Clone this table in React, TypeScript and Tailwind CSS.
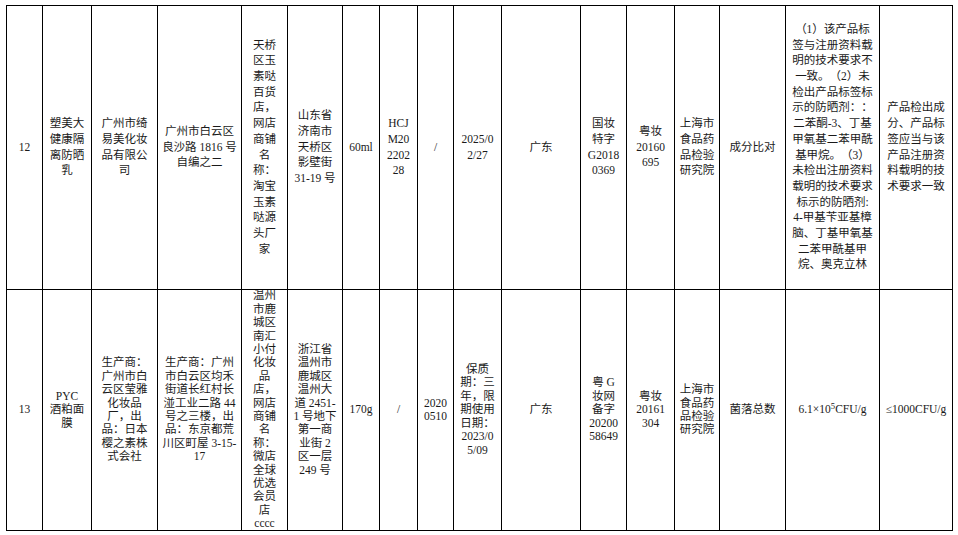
import React from "react";

type Cell = string[] | React.ReactNode;

const row12: Cell[] = [
  ["12"],
  ["塑美大", "健康隔", "离防晒", "乳"],
  ["广州市绮", "易美化妆", "品有限公", "司"],
  ["广州市白云区", "良沙路 1816 号", "自编之二"],
  ["天桥", "区玉", "素哒", "百货", "店，", "网店", "商铺", "名", "称：", "淘宝", "玉素", "哒源", "头厂", "家"],
  ["山东省", "济南市", "天桥区", "影壁街", "31-19 号"],
  ["60ml"],
  ["HCJ", "M20", "2202", "28"],
  ["/"],
  ["2025/0", "2/27"],
  ["广东"],
  ["国妆", "特字", "G2018", "0369"],
  ["粤妆", "20160", "695"],
  ["上海市", "食品药", "品检验", "研究院"],
  ["成分比对"],
  [
    "（1）该产品标",
    "签与注册资料载",
    "明的技术要求不",
    "一致。（2）未",
    "检出产品标签标",
    "示的防晒剂：：",
    "二苯酮-3、丁基",
    "甲氧基二苯甲酰",
    "基甲烷。（3）",
    "未检出注册资料",
    "载明的技术要求",
    "标示的防晒剂:",
    "4-甲基苄亚基樟",
    "脑、丁基甲氧基",
    "二苯甲酰基甲",
    "烷、奥克立林",
  ],
  ["产品检出成", "分、产品标", "签应当与该", "产品注册资", "料载明的技", "术要求一致"],
];

const row13: Cell[] = [
  ["13"],
  ["PYC", "酒粕面", "膜"],
  ["生产商：", "广州市白", "云区莹雅", "化妆品", "厂，出", "品：日本", "樱之素株", "式会社"],
  ["生产商：广州", "市白云区均禾", "街道长红村长", "湴工业二路 44", "号之三楼，出", "品：东京都荒", "川区町屋 3-15-", "17"],
  ["温州", "市鹿", "城区", "南汇", "小付", "化妆", "品", "店，", "网店", "商铺", "名", "称：", "微店", "全球", "优选", "会员", "店", "cccc"],
  ["浙江省", "温州市", "鹿城区", "温州大", "道 2451-", "1 号地下", "第一商", "业街 2", "区一层", "249 号"],
  ["170g"],
  ["/"],
  ["2020", "0510"],
  ["保质", "期：三", "年，限", "期使用", "日期：", "2023/0", "5/09"],
  ["广东"],
  ["粤 G", "妆网", "备字", "20200", "58649"],
  ["粤妆", "20161", "304"],
  ["上海市", "食品药", "品检验", "研究院"],
  ["菌落总数"],
  [
    <span key="a">
      6.1×10<sup>5</sup>CFU/g
    </span>,
  ],
  ["≤1000CFU/g"],
];

function CellView({ lines, rowIdx }: { lines: Cell; rowIdx: number }) {
  const arr = Array.isArray(lines) ? lines : [lines];
  return (
    <div
      className={
        "flex flex-col items-center justify-center overflow-hidden border-r border-b border-black text-center whitespace-nowrap " +
        (rowIdx === 0 ? "leading-[15.7px]" : "leading-[13.4px]")
      }
    >
      {arr.map((l, i) => (
        <div key={i}>{l}</div>
      ))}
    </div>
  );
}

export default function App() {
  return (
    <div className="w-[958px] h-[535px] bg-white overflow-hidden pt-[5px] pl-[6px]">
      <div
        className="grid grid-cols-[36px_49px_66px_84px_46px_55px_37px_38px_36px_48px_79px_46px_48px_45px_66px_94px_73px] grid-rows-[284px_241px] w-fit border-l border-t border-black text-[11.5px] text-[#1a1a1a] [text-spacing-trim:space-all]"
        style={{ fontFamily: '"Liberation Serif", "Noto Sans CJK SC", serif' }}
      >
        {row12.map((c, i) => (
          <CellView key={"a" + i} lines={c} rowIdx={0} />
        ))}
        {row13.map((c, i) => (
          <CellView key={"b" + i} lines={c} rowIdx={1} />
        ))}
      </div>
    </div>
  );
}
